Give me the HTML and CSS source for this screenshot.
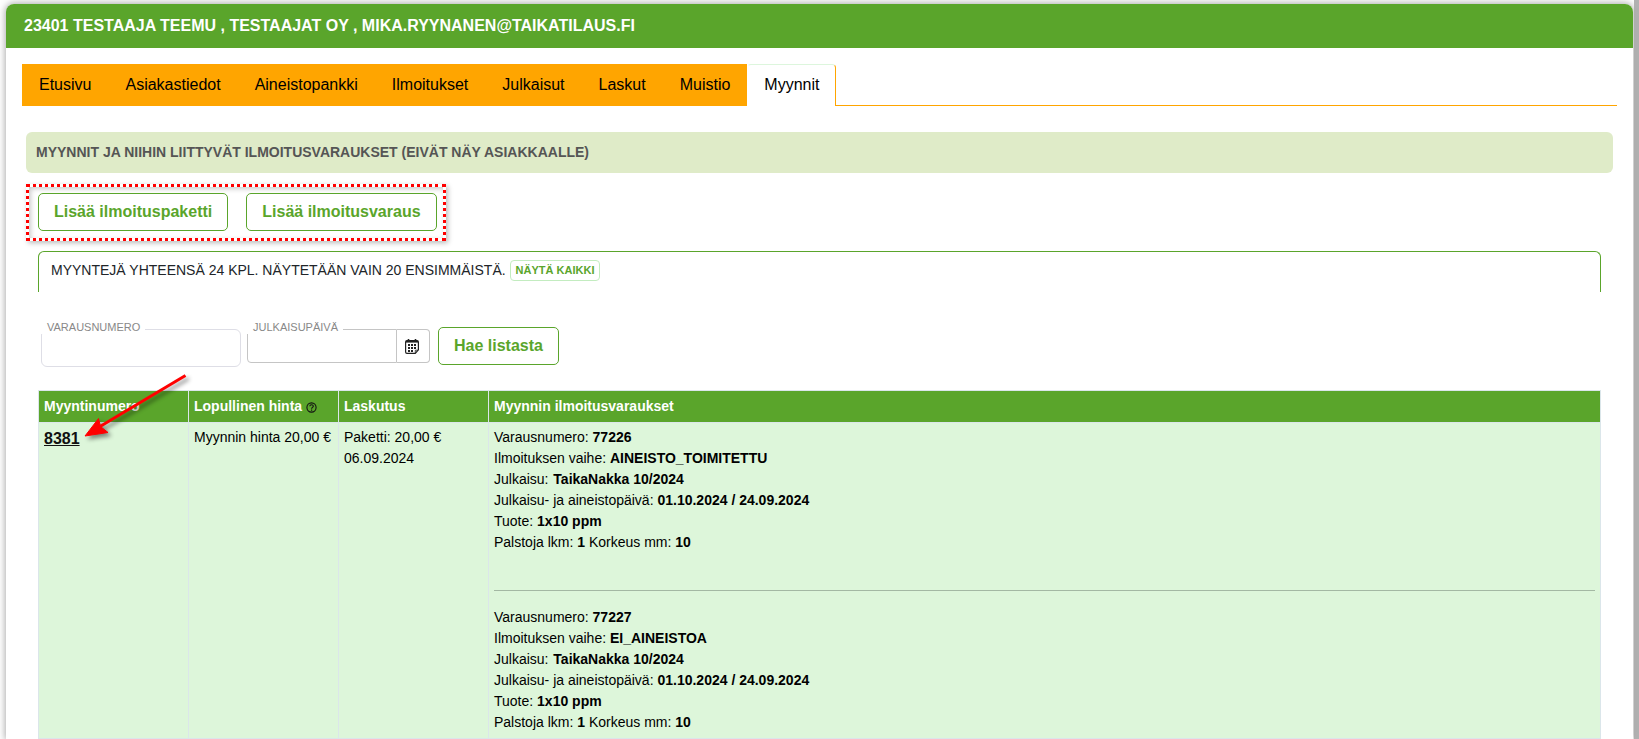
FILE: index.html
```html
<!DOCTYPE html>
<html lang="fi">
<head>
<meta charset="utf-8">
<title>Myynnit</title>
<link rel="stylesheet" href="styles.css">
</head>
<body>
<main class="panel">
  <h1 class="panel-title">23401 TESTAAJA TEEMU , TESTAAJAT OY , MIKA.RYYNANEN@TAIKATILAUS.FI</h1>
  <div class="panel-body">
    <nav class="tabs">
      <a class="tab" href="#">Etusivu</a>
      <a class="tab" href="#">Asiakastiedot</a>
      <a class="tab" href="#">Aineistopankki</a>
      <a class="tab" href="#">Ilmoitukset</a>
      <a class="tab" href="#">Julkaisut</a>
      <a class="tab" href="#">Laskut</a>
      <a class="tab" href="#">Muistio</a>
      <a class="tab tab-active" href="#" aria-current="page">Myynnit</a>
    </nav>
    <section class="sales">
      <h2 class="section-title">MYYNNIT JA NIIHIN LIITTYVÄT ILMOITUSVARAUKSET (EIVÄT NÄY ASIAKKAALLE)</h2>
      <div class="actions">
        <button class="btn" type="button">Lisää ilmoituspaketti</button>
        <button class="btn" type="button">Lisää ilmoitusvaraus</button>
      </div>
      <div class="content">
        <div class="notice">
          <span>MYYNTEJÄ YHTEENSÄ 24 KPL. NÄYTETÄÄN VAIN 20 ENSIMMÄISTÄ.</span>
          <button class="btn-small" type="button">NÄYTÄ KAIKKI</button>
        </div>
        <form class="filters">
          <div class="field">
            <label class="field-label" for="number">VARAUSNUMERO</label>
            <input class="field-input" id="number" type="text">
          </div>
          <div class="field field-date">
            <label class="field-label" for="date">JULKAISUPÄIVÄ</label>
            <input class="field-input" id="date" type="text">
            <button class="date-button" type="button" aria-label="Valitse päivä">
              <svg width="14" height="15" viewBox="0 0 14 15" fill="none" stroke="#222">
                <path d="M2 1.700h10q1.400 0 1.400 1.400V10.800L10.300 14.400H2q-1.400 0-1.400-1.400V3.100Q.6 1.700 2 1.700z" stroke-width="1.200"/>
                <path d="M1 2.700h12" stroke-width="1.800"/>
                <path d="M3.500 0v2M10.500 0v2" stroke-width="1.600"/>
                <path d="M3 6h8M3 9h8M3 12h5" stroke-width="2" stroke-dasharray="2 1"/>
                <path d="M10.300 14v-2.800h2.800" stroke-width=".8"/>
              </svg>
            </button>
          </div>
          <button class="btn" type="button">Hae listasta</button>
        </form>
        <div class="table-area">
          <table class="table">
            <thead>
              <tr>
                <th class="col-narrow">Myyntinumero</th>
                <th class="col-narrow">Lopullinen hinta
                  <svg class="help" width="11" height="11" viewBox="0 0 11 11" fill="none" stroke="#111" stroke-width="1.100">
                    <circle cx="5.500" cy="5.500" r="4.600"/>
                    <path d="M3.800 4.300c0-2.100 3.500-2.100 3.500-.1 0 1.200-1.700 1.100-1.700 2.500M5.600 7.600v1.100"/>
                  </svg>
                </th>
                <th class="col-narrow">Laskutus</th>
                <th>Myynnin ilmoitusvaraukset</th>
              </tr>
            </thead>
            <tbody>
              <tr>
                <td><a class="sale-link" href="#">8381</a></td>
                <td>Myynnin hinta 20,00 €</td>
                <td>Paketti: 20,00 €<br>06.09.2024</td>
                <td>
                  <div class="booking">
                    Varausnumero: <b>77226</b><br>
                    Ilmoituksen vaihe: <b>AINEISTO_TOIMITETTU</b><br>
                    Julkaisu: <b class="issue">TaikaNakka 10/2024</b><br>
                    Julkaisu- ja aineistopäivä: <b>01.10.2024 / 24.09.2024</b><br>
                    Tuote: <b>1x10 ppm</b><br>
                    Palstoja lkm: <b>1</b> Korkeus mm: <b>10</b>
                  </div>
                  <hr class="divider">
                  <div class="booking">
                    Varausnumero: <b>77227</b><br>
                    Ilmoituksen vaihe: <b>EI_AINEISTOA</b><br>
                    Julkaisu: <b class="issue">TaikaNakka 10/2024</b><br>
                    Julkaisu- ja aineistopäivä: <b>01.10.2024 / 24.09.2024</b><br>
                    Tuote: <b>1x10 ppm</b><br>
                    Palstoja lkm: <b>1</b> Korkeus mm: <b>10</b>
                  </div>
                </td>
              </tr>
            </tbody>
          </table>
          <svg class="arrow" width="120" height="80" viewBox="0 0 120 80">
            <path d="M102.500 6.500L17 57.500" fill="none" stroke="#f00" stroke-width="3"/>
            <path d="M2 67L15.500 49.500L17.500 57.500L25 63.500Z" fill="#f00" stroke="#f00"/>
          </svg>
        </div>
      </div>
    </section>
  </div>
</main>
</body>
</html>
```
FILE: styles.css
```css
* {
  box-sizing: border-box;
}

body {
  margin: 0;
  padding: 4px 6px 0;
  background: linear-gradient(to left, #b2b2b2 5px, #fff 5px);
  font-family: "Liberation Sans", Arial, sans-serif;
  font-size: 14px;
  line-height: 21px;
  color: #000;
}

.panel {
  border-radius: 8px 8px 0 0;
  background: #fff;
  box-shadow: 0 0 7px 1px #aaa;
}

.panel-title {
  margin: 0;
  padding: 10px 18px;
  border-radius: 8px 8px 0 0;
  background: #5aa52b;
  color: #fff;
  font-size: 16px;
  line-height: 24px;
}

.panel-body {
  padding: 16px 16px 0;
}

.tabs {
  display: flex;
  border-bottom: 1px solid orange;
}

.tab {
  padding: 8px 16px;
  border: 1px solid orange;
  border-bottom: 0;
  background: orange;
  color: #000;
  font-size: 16px;
  line-height: 24px;
  text-decoration: none;
  height: 41px;
}

.tab-active {
  height: 42px;
  margin-bottom: -1px;
  border-top-color: #ddf6dd;
  border-left-color: #fff;
  border-radius: 4px 4px 0 0;
  background: #fff;
}

.sales {
  padding: 26px 4px 0;
}

.section-title {
  margin: 0 0 11px;
  padding: 10px;
  border-radius: 6px;
  background: #dfebc8;
  color: #555;
  font-size: 14px;
  line-height: 21px;
}

.actions {
  display: flex;
  gap: 18px;
  width: fit-content;
  padding: 6px 6px 7px 9px;
  border: 3px dotted #f00;
  box-shadow: 2px 2px 5px #bbb, inset 2px 2px 5px #ccc;
}

.btn {
  height: 38px;
  padding: 0 15px;
  border: 1px solid #5aa52b;
  border-radius: 5px;
  background: #fff;
  color: #5aa52b;
  font: bold 16px/24px "Liberation Sans", Arial, sans-serif;
}

.content {
  padding: 10px 12px 0;
}

.notice {
  display: flex;
  align-items: center;
  gap: 4px;
  height: 41px;
  padding: 0 12px 4px;
  border: solid #5aa52b;
  border-width: 1px 1px 0;
  border-radius: 6px 6px 0 0;
  color: #212529;
}

.btn-small {
  height: 21px;
  padding: 0 5px;
  border: 1px solid #c3ecc0;
  border-radius: 4px;
  background: #fff;
  color: #5aa52b;
  font: bold 11px/16px "Liberation Sans", Arial, sans-serif;
}

.filters {
  display: flex;
  padding: 35px 3px 0;
}

.field {
  position: relative;
  display: flex;
  width: 200px;
  height: 38px;
  margin: 2px 6px 0 0;
}

.field-label {
  position: absolute;
  top: -9px;
  left: 0;
  padding: 0 5px 0 6px;
  background: #fff;
  color: #888;
  font-size: 11px;
  line-height: 14px;
}

.field-input {
  flex: 1;
  min-width: 0;
  border: 1px solid #dedee6;
  border-radius: 6px;
  background: #fff;
}

.field-date {
  width: 183px;
  height: 34px;
  margin-right: 8px;
}

.field-date .field-input {
  border-color: #c5c5c5;
  border-radius: 4px 0 0 4px;
}

.date-button {
  display: flex;
  align-items: center;
  justify-content: center;
  width: 33px;
  padding: 0 2px 0 0;
  border: 1px solid #c5c5c5;
  border-left: 0;
  border-radius: 0 4px 4px 0;
  background: #fff;
}

.table-area {
  position: relative;
  padding-top: 23px;
}

.table {
  width: 100%;
  border-collapse: collapse;
  table-layout: fixed;
}

.table th,
.table td {
  padding: 5px;
  border: 1px solid #dbe6ea;
  text-align: left;
  vertical-align: top;
}

.table th {
  background: #5aa52b;
  color: #fff;
}

.table td {
  padding: 4px 5px 5px;
  background: #ddf6da;
}

.col-narrow {
  width: 150px;
}

.help {
  vertical-align: -2px;
}

.sale-link {
  color: #111;
  font-size: 16px;
  font-weight: bold;
  line-height: 24px;
}

.issue {
  margin-left: 1px;
}

.divider {
  margin: 37px 0 16px;
  border: 0;
  border-top: 1px solid #a3b8a3;
}

.arrow {
  position: absolute;
  top: 2px;
  left: 45px;
  filter: drop-shadow(3px 3px 2px rgba(0, 0, 0, .45));
}
```
